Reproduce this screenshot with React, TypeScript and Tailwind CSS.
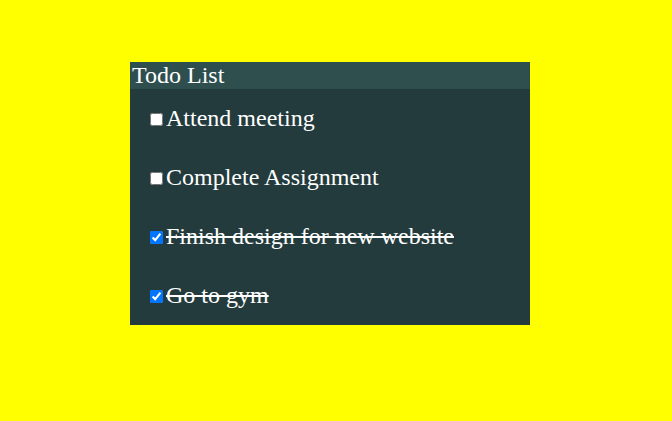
import React, { useState } from 'react'

type Todo = {
  id: number
  title: string
  done: boolean
}

function App() {
  const [todos, setTodos] = useState<Todo[]>([
    { id: 1, title: 'Attend meeting', done: false },
    { id: 2, title: 'Complete Assignment', done: false },
    { id: 3, title: 'Finish design for new website', done: true },
    { id: 4, title: 'Go to gym', done: true },
  ])

  const handleToggle = (id: number) => {
    setTodos(todos.map((t) => (t.id === id ? { ...t, done: !t.done } : t)))
  }

  return (
    <div className="min-h-[421px] w-full bg-[#ffff00] pl-[130px] pt-[62px] font-['Liberation_Serif',serif] text-white">
      <div className="w-[400px] bg-[#233b3d]">
        <div className="h-[27px] bg-[#2f4f4f] pl-[2px] text-[24px] leading-[27px]">Todo List</div>
        <ul>
          {todos.map((todo) => (
            <li key={todo.id} className="flex h-[59px] items-center pl-[20px]">
              <input
                type="checkbox"
                checked={todo.done}
                onChange={() => handleToggle(todo.id)}
                className="m-0 mt-[2px] h-[13px] w-[13px]"
              />
              <span className={'ml-[3px] text-[24px] leading-[27px] ' + (todo.done ? 'line-through' : '')}>
                {todo.title}
              </span>
            </li>
          ))}
        </ul>
      </div>
    </div>
  )
}

export default App
